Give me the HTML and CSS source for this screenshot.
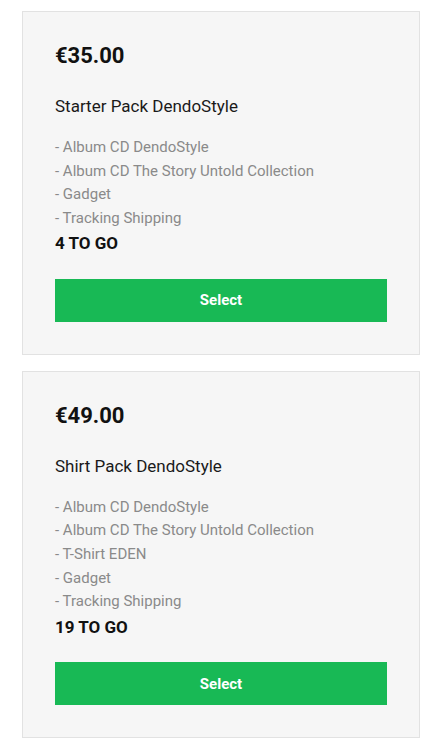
FILE: index.html
```html
<!DOCTYPE html>
<html>
<head>
<meta charset="utf-8">
<link rel="stylesheet" href="styles.css">
</head>
<body>
<div class="list">
  <div class="card">
    <div class="price">€35.00</div>
    <div class="title">Starter Pack DendoStyle</div>
    <ul class="items">
      <li>- Album CD DendoStyle</li>
      <li>- Album CD The Story Untold Collection</li>
      <li>- Gadget</li>
      <li>- Tracking Shipping</li>
    </ul>
    <div class="stock">4 TO GO</div>
    <button class="select">Select</button>
  </div>
  <div class="card">
    <div class="price">€49.00</div>
    <div class="title">Shirt Pack DendoStyle</div>
    <ul class="items">
      <li>- Album CD DendoStyle</li>
      <li>- Album CD The Story Untold Collection</li>
      <li>- T-Shirt EDEN</li>
      <li>- Gadget</li>
      <li>- Tracking Shipping</li>
    </ul>
    <div class="stock">19 TO GO</div>
    <button class="select">Select</button>
  </div>
</div>
</body>
</html>
```
FILE: styles.css
```css
html, body {
  margin: 0;
  padding: 0;
  background: #ffffff;
  font-family: Roboto, "Liberation Sans", sans-serif;
}
.list {
  display: flex;
  flex-direction: column;
  gap: 16px;
  padding: 11px 20px 0 22px;
}
.card {
  background: #f6f6f6;
  border: 1px solid #e2e2e2;
  padding: 30px 32px 32px 32px;
  display: flex;
  flex-direction: column;
}
.price {
  font-size: 22px;
  font-weight: 700;
  color: #111;
  line-height: 28px;
}
.title {
  margin-top: 24px;
  font-size: 17px;
  line-height: 24px;
  color: #1a1a1a;
}
.items {
  list-style: none;
  margin: 18px 0 0 0;
  padding: 0;
  font-size: 15px;
  line-height: 23.6px;
  color: #8a8a8a;
}
.stock {
  margin-top: 1px;
  font-size: 17px;
  font-weight: 700;
  line-height: 24px;
  color: #111;
}
.select {
  margin-top: 23.5px;
  height: 43px;
  border: none;
  background: #18b955;
  color: #fff;
  font-family: Roboto, "Liberation Sans", sans-serif;
  font-size: 15px;
  font-weight: 700;
  padding: 0;
  width: 100%;
}
```
